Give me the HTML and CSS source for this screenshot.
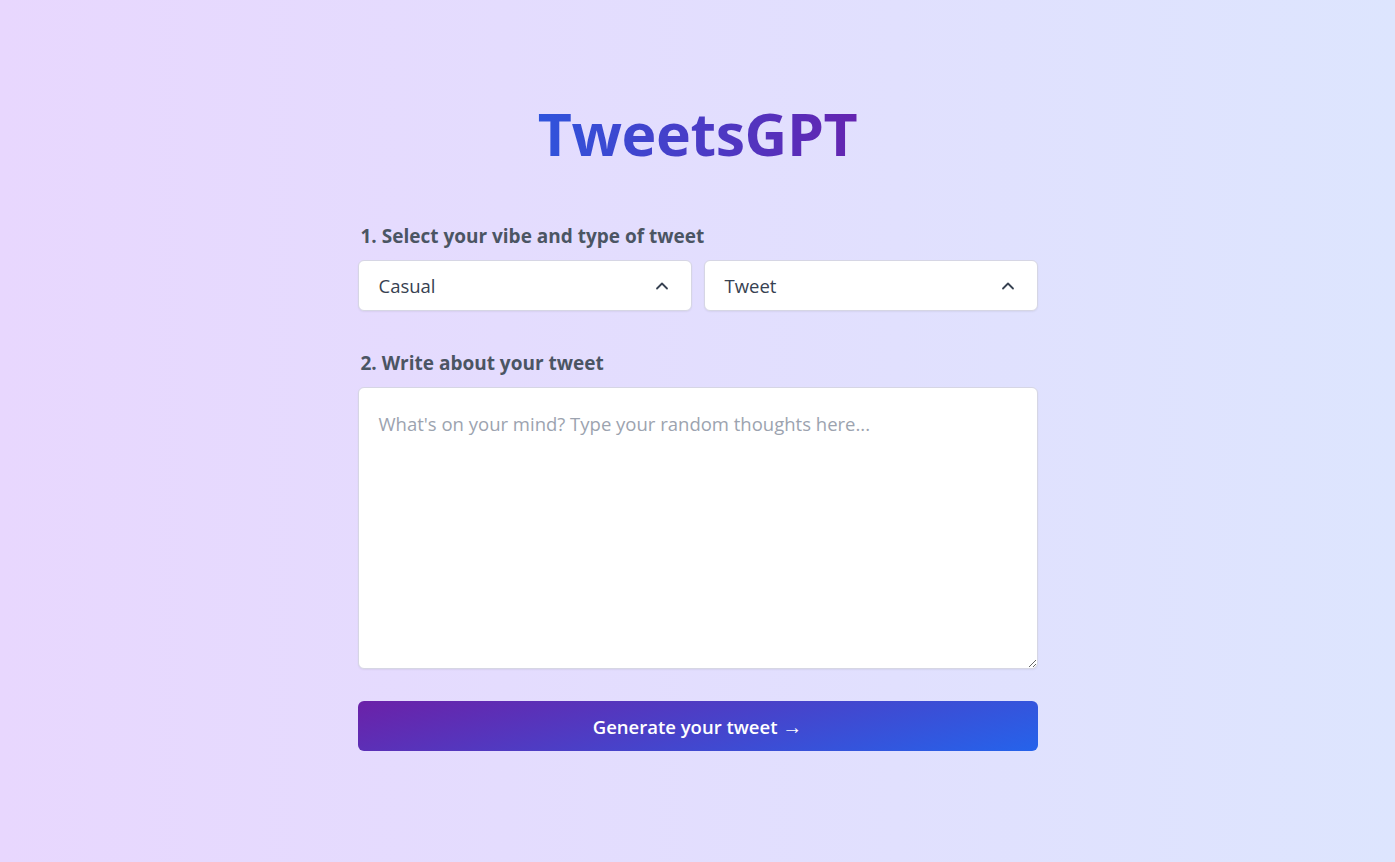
FILE: index.html
```html
<!DOCTYPE html>
<html lang="en">
<head>
<meta charset="utf-8">
<title>TweetsGPT</title>
<link rel="stylesheet" href="styles.css">
</head>
<body>
<main class="page">
  <h1 class="title">TweetsGPT</h1>
  <section class="form">
    <label class="label">1. Select your vibe and type of tweet</label>
    <div class="selects">
      <div class="select">
        <span>Casual</span>
        <svg class="chev" width="16" height="16" viewBox="0 0 16 16"><path d="M3 10.5 L8 5.5 L13 10.5" fill="none" stroke="#374151" stroke-width="1.8" stroke-linecap="round" stroke-linejoin="round"/></svg>
      </div>
      <div class="select">
        <span>Tweet</span>
        <svg class="chev" width="16" height="16" viewBox="0 0 16 16"><path d="M3 10.5 L8 5.5 L13 10.5" fill="none" stroke="#374151" stroke-width="1.8" stroke-linecap="round" stroke-linejoin="round"/></svg>
      </div>
    </div>
    <label class="label label-2">2. Write about your tweet</label>
    <textarea class="area" placeholder="What's on your mind? Type your random thoughts here..."></textarea>
    <button class="btn">Generate your tweet <span class="arrow">→</span></button>
  </section>
</main>
</body>
</html>
```
FILE: styles.css
```css
* { box-sizing: border-box; }
html, body { margin: 0; height: 100%; }
body {
  background: linear-gradient(to right, #e8d7fe, #dde5fe);
  font-family: "Open Sans", "Noto Sans", sans-serif;
  color: #374151;
}
.page {
  display: flex;
  flex-direction: column;
  align-items: center;
  padding-top: 91px;
}
.title {
  margin: 0;
  font-size: 59px;
  line-height: 84px;
  font-weight: 700;
  letter-spacing: -0.4px;
  background: linear-gradient(to right, #2f54dc, #6424b0);
  -webkit-background-clip: text;
  background-clip: text;
  color: transparent;
}
.form {
  width: 680px;
  margin-top: 48px;
  display: flex;
  flex-direction: column;
}
.label {
  font-size: 19px;
  font-weight: 700;
  color: #4b5563;
  line-height: 26px;
  padding-left: 3px;
}
.selects {
  display: flex;
  gap: 12px;
  margin-top: 11px;
}
.select {
  flex: 1;
  height: 51px;
  background: #fff;
  border: 1px solid #d6d6e4;
  border-radius: 6px;
  box-shadow: 0 1px 2px rgba(0,0,0,0.06);
  display: flex;
  align-items: center;
  justify-content: space-between;
  padding: 0 21px 0 20px;
  font-size: 18.5px;
  color: #374151;
}
.chev { display: block; }
.label-2 { margin-top: 39px; }
.area {
  margin-top: 11px;
  height: 282px;
  width: 100%;
  resize: vertical;
  border: 1px solid #d6d6e4;
  border-radius: 6px;
  box-shadow: 0 1px 2px rgba(0,0,0,0.06);
  padding: 22px 20px;
  font-family: inherit;
  font-size: 18.5px;
  line-height: 28px;
  color: #374151;
  outline: none;
}
.area::placeholder { color: #9ca3af; }
.btn {
  margin-top: 32px;
  height: 50px;
  border: none;
  border-radius: 6px;
  background: linear-gradient(165deg, #6b21a8, #2563eb);
  color: #fff;
  font-family: inherit;
  font-size: 18.5px;
  font-weight: 600;
  cursor: pointer;
}
.arrow { font-size: 20px; font-weight: 400; }
```
